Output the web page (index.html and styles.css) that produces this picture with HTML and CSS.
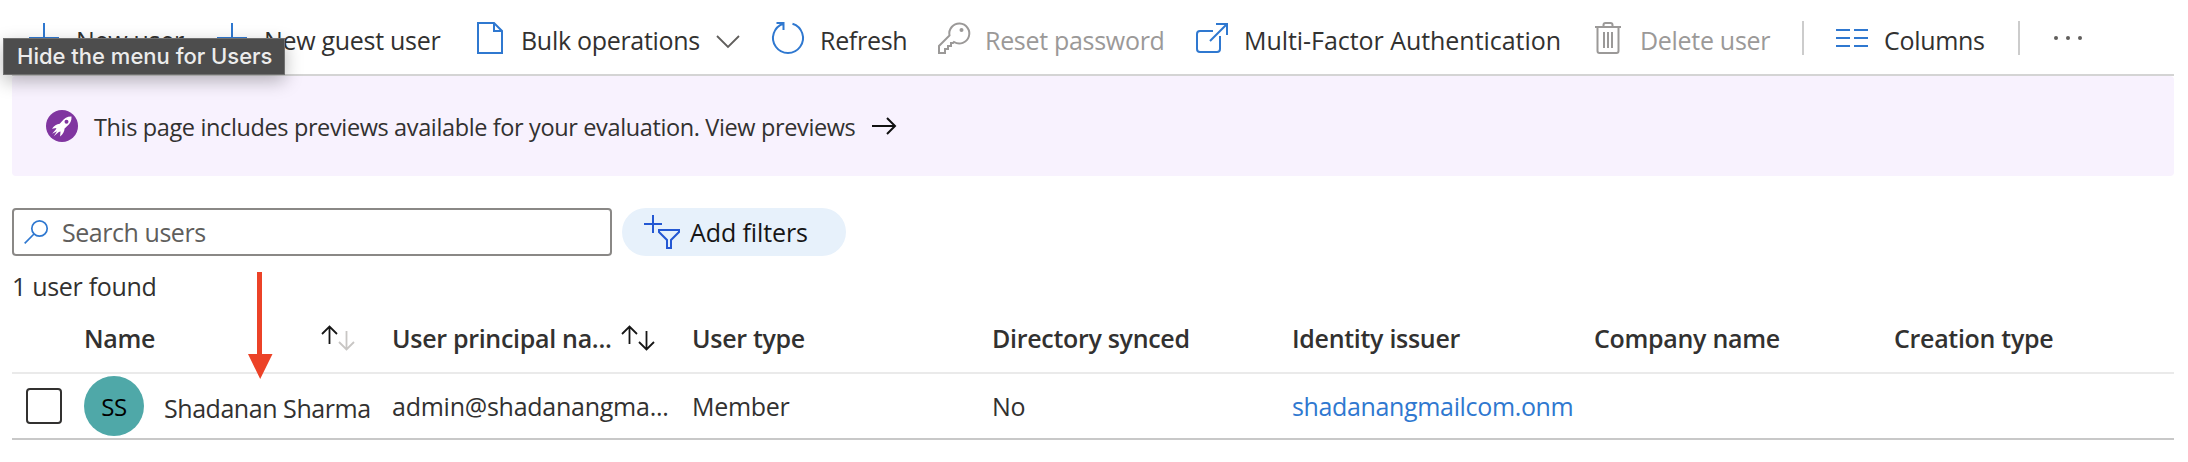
FILE: index.html
```html
<!DOCTYPE html>
<html lang="en">
<head>
<meta charset="utf-8">
<title>Users</title>
<link rel="stylesheet" href="styles.css">
</head>
<body>
<div class="page">
  <div class="toolbar">
    <div class="cmd"><svg class="icon" viewBox="0 0 32 32"><path d="M16 1v30M1 16h30"/></svg><span>New user</span></div>
    <div class="cmd"><svg class="icon" viewBox="0 0 32 32"><path d="M16 1v30M1 16h30"/></svg><span>New guest user</span></div>
    <div class="cmd bulk"><svg class="icon" viewBox="0 0 32 32"><path d="M4 1h16l8 8v22H4zM20 1v8h8"/></svg><span>Bulk operations</span><svg class="chevron" viewBox="0 0 24 14"><path d="M1 1l11 11L23 1"/></svg></div>
    <div class="cmd"><svg class="icon" viewBox="0 0 32 32"><path d="M20.500 1.700A15 15 0 1 1 11.500 1.700M4.500 1H11.500V8"/></svg><span>Refresh</span></div>
    <div class="cmd off reset"><svg class="icon" viewBox="0 0 32 32"><path d="M1 31v-7l10.500-10.500A10 10 0 1 1 16 20l-1 1h-2v3h-3v3H7v4z"/><circle class="solid" cx="23.500" cy="8" r="2"/></svg><span>Reset password</span></div>
    <div class="cmd mfa"><svg class="icon" viewBox="0 0 32 32"><path d="M17 9H4a3 3 0 0 0-3 3v15a3 3 0 0 0 3 3h17a3 3 0 0 0 3-3V14M20 2h11v11M31 2L14 19"/></svg><span>Multi-Factor Authentication</span></div>
    <div class="cmd off"><svg class="icon" viewBox="0 0 32 32"><path d="M3 5h26M5.500 5v24a2 2 0 0 0 2 2h17a2 2 0 0 0 2-2V5M11.500 5V3a2 2 0 0 1 2-2h5a2 2 0 0 1 2 2v2M12 10v16M16 10v16M20 10v16"/></svg><span>Delete user</span></div>
    <div class="divider"></div>
    <div class="cmd"><svg class="icon" viewBox="0 0 32 32"><path d="M0 8h14M18 8h14M0 16h14M18 16h14M0 24h14M18 24h14"/></svg><span>Columns</span></div>
    <div class="divider"></div>
    <div class="cmd"><svg class="icon more" viewBox="0 0 32 32"><circle cx="4" cy="16" r="2"/><circle cx="16" cy="16" r="2"/><circle cx="28" cy="16" r="2"/></svg></div>
  </div>

  <div class="banner">
    <svg class="rocket" viewBox="0 0 32 32"><circle cx="16" cy="16" r="16" fill="#8035a0"/><path fill="#fff" fill-rule="evenodd" d="M25.500 6.500c-4-.2-7 1.500-9.500 4.700l-2.300 2.600c-3 .2-5.700 1.800-7.700 5l4.400-.9-.6 1.700-3.600 4.200 4.800-2.500-3.200 5 5-4.400 1.700-.5-.4 5c3-2 4.200-4.900 4.500-7.900l2.400-2.200c3.200-2.700 4.800-5.700 4.500-9.800zM20.500 9.700a2 2 0 1 1 0 4 2 2 0 0 1 0-4z"/></svg>
    <span class="banner-text">This page includes previews available for your evaluation. View previews</span>
    <svg class="go" viewBox="0 0 24 18"><path d="M0 9h23M15 1l8 8-8 8"/></svg>
  </div>

  <div class="filters">
    <div class="search">
      <svg class="lens" viewBox="0 0 24 24"><circle cx="15.500" cy="8.500" r="7.700"/><path d="M10 14L.7 23.300"/></svg>
      <span>Search users</span>
    </div>
    <div class="pill">
      <svg class="funnel" viewBox="0 0 36 34"><path d="M9 0v18M0 9h18M15 15h20v2L27 25v8h-4v-8l-8-8z"/></svg>
      <span>Add filters</span>
    </div>
  </div>

  <div class="count">1 user found</div>

  <div class="row head">
    <div></div>
    <div class="cell"><span class="h-name">Name</span><svg class="sort" viewBox="0 0 34 26"><path d="M8.500 19V2M1 9l7.500-7.500L16 9"/><path class="dim" d="M25.500 6v18M18 17l7.500 7.500L33 17"/></svg></div>
    <div class="cell"><span class="h-upn">User principal na...</span><svg class="sort" viewBox="0 0 34 26"><path d="M8.500 19V2M1 9l7.500-7.500L16 9"/><path d="M25.500 6v18M18 17l7.500 7.500L33 17"/></svg></div>
    <div class="cell"><span>User type</span></div>
    <div class="cell"><span>Directory synced</span></div>
    <div class="cell"><span>Identity issuer</span></div>
    <div class="cell"><span>Company name</span></div>
    <div class="cell"><span>Creation type</span></div>
  </div>

  <div class="row data">
    <div><div class="checkbox"></div></div>
    <div class="cell person"><div class="avatar">SS</div><span class="person-name">Shadanan Sharma</span></div>
    <div class="cell"><span class="upn">admin@shadanangma...</span></div>
    <div class="cell"><span>Member</span></div>
    <div class="cell"><span>No</span></div>
    <div class="cell"><a class="link">shadanangmailcom.onm</a></div>
    <div></div>
    <div></div>
  </div>

  <svg class="pointer" viewBox="0 0 26 107"><path d="M10 0h5v82h10.500L13.200 107 1 82h9z"/></svg>
  <div class="tooltip">Hide the menu for Users</div>
</div>
</body>
</html>
```

FILE: styles.css
```css
* { box-sizing: border-box; }

body {
  margin: 0;
  background: #fff;
  color: #323130;
  font-family: "Open Sans", "Noto Sans", sans-serif;
  font-size: 25px;
  line-height: 34px;
  letter-spacing: -0.3px;
  white-space: nowrap;
}

.page {
  position: relative;
  width: 2188px;
  height: 462px;
  padding: 0 14px 0 12px;
  overflow: hidden;
}

svg { display: block; flex: none; overflow: visible; fill: none; stroke-width: 2; }

/* Command bar */
.toolbar {
  display: grid;
  grid-template-columns: 188px 258px 298px 166px 258px 396px 210px 34px 182px 34px 1fr;
  height: 76px;
  padding-left: 16px;
  border-bottom: 2px solid #d4d4d4;
}
.cmd { display: flex; align-items: center; height: 76px; }
.cmd span { margin-left: 16px; padding-top: 4px; }
.bulk span, .reset span { margin-left: 15px; }
.mfa span { letter-spacing: -0.05px; }
.icon { width: 32px; height: 32px; stroke: #2f78d0; }
.chevron { width: 24px; height: 14px; margin: 8px 0 0 16px; stroke: #605e5c; stroke-width: 1.8; }
.off { color: #9b9998; }
.off .icon { stroke: #9b9998; }
.off .solid { fill: #9b9998; stroke: none; }
.cmd .more { fill: #605e5c; stroke: none; }
.divider { width: 2px; height: 34px; margin-top: 21px; background: #ccc; }

/* Preview banner */
.banner {
  display: flex;
  align-items: center;
  height: 100px;
  padding-left: 34px;
  border-radius: 4px;
  background: #f8f2fe;
}
.rocket { width: 32px; height: 32px; }
.banner-text { margin-left: 16px; padding-top: 2px; font-size: 23.5px; letter-spacing: -0.37px; }
.go { width: 24px; height: 18px; margin-left: 17px; stroke: #111; }

/* Search and filters */
.filters { display: flex; gap: 10px; margin-top: 32px; }
.search {
  display: flex;
  align-items: center;
  width: 600px;
  height: 48px;
  padding-left: 10px;
  border: 2px solid #8a8886;
  border-radius: 4px;
  color: #605e5c;
}
.search span { margin-left: 14px; letter-spacing: -0.45px; }
.lens { width: 24px; height: 24px; stroke: #2f78d0; stroke-width: 1.7; }
.pill {
  display: flex;
  align-items: center;
  width: 224px;
  height: 48px;
  padding-left: 22px;
  border-radius: 24px;
  background: #e7f1fb;
  color: #161616;
}
.pill span { margin-left: 10px; letter-spacing: -0.1px; }
.funnel { width: 36px; height: 34px; stroke: #2458d3; }

.count { height: 34px; margin-top: 13px; }

/* Users table */
.row {
  display: grid;
  grid-template-columns: 72px 308px 300px 300px 300px 302px 300px 1fr;
  align-items: center;
}
.cell { display: flex; align-items: center; }
.head { height: 71px; border-bottom: 2px solid #eaeaea; font-weight: 600; }
.sort { width: 34px; height: 26px; stroke: #161616; stroke-width: 1.8; }
.sort .dim { stroke: #c8c6c4; }
.h-name { width: 237px; }
.h-upn { width: 229px; }
.data { height: 66px; border-bottom: 2px solid #c8c8c8; }
.checkbox { width: 36px; height: 36px; margin-left: 14px; border: 2px solid #323130; border-radius: 4px; }
.avatar {
  width: 60px;
  height: 60px;
  border-radius: 50%;
  background: #4fa8a8;
  color: #000;
  font-size: 24px;
  line-height: 62px;
  text-align: center;
}
.person-name { margin-left: 20px; padding-top: 4px; letter-spacing: -0.45px; }
.upn { letter-spacing: -0.25px; }
.link { color: #2f78d0; letter-spacing: -0.35px; }

/* Overlays */
.pointer { position: absolute; left: 247px; top: 272px; width: 26px; height: 107px; fill: #ec4227; }
.tooltip {
  position: absolute;
  left: 3px;
  top: 38px;
  width: 282px;
  height: 37px;
  padding-left: 13px;
  border: 1px solid #707070;
  background: #4d4d4d;
  box-shadow: 0 6px 18px rgba(0, 0, 0, .28);
  color: #ececec;
  font: 500 22px/35px Inter, sans-serif;
  letter-spacing: 0;
}
```
